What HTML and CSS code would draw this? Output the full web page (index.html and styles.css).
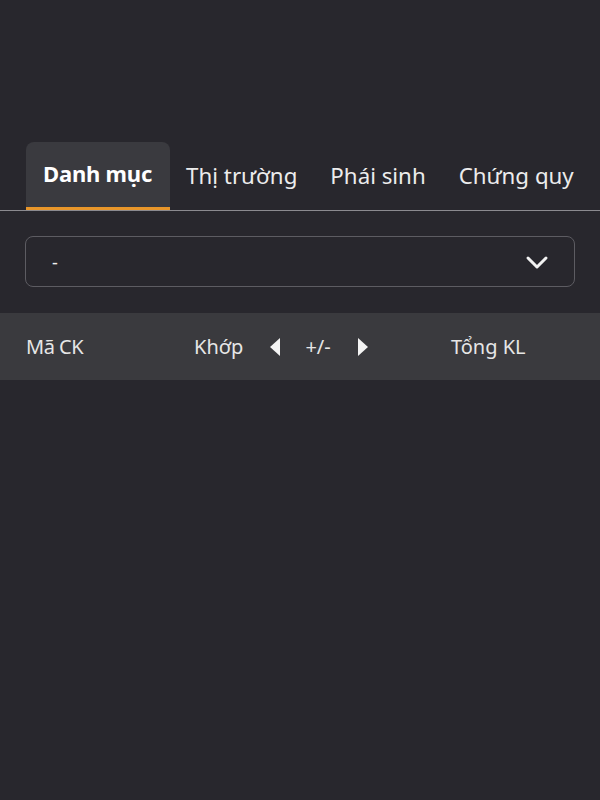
FILE: index.html
```html
<!DOCTYPE html>
<html lang="vi">
<head>
  <meta charset="UTF-8" />
  <meta name="viewport" content="width=device-width, initial-scale=1.0" />
  <title>Danh mục</title>
  <link rel="stylesheet" href="styles.css">
</head>
<body>
  <div class="tabs">
    <div class="tab active">Danh mục</div>
    <div class="tab">Thị trường</div>
    <div class="tab">Phái sinh</div>
    <div class="tab">Chứng quy</div>
  </div>

  <div class="picker">
    <div class="select">
      <span>-</span>
      <svg width="24" height="16" viewBox="0 0 24 16">
        <path d="M3 4l9 9 9-9" fill="none" stroke="#f2f2f2" stroke-width="3" stroke-linecap="round" stroke-linejoin="round" />
      </svg>
    </div>
  </div>

  <div class="head">
    <div class="col code">Mã CK</div>
    <div class="col match">
      Khớp
      <span class="arrow left"></span>
      <span class="pm">+/-</span>
      <span class="arrow right"></span>
    </div>
    <div class="col total">Tổng KL</div>
  </div>
</body>
</html>
```

FILE: styles.css
```css
body {
  margin: 0;
  background-color: #28272d;
  color: #f0f0f0;
  font-family: "Noto Sans", sans-serif;
  height: 800px;
}
.tabs {
  display: flex;
  padding: 142px 0 0 26px;
  border-bottom: 1px solid #8b8a8f;
  overflow: hidden;
  white-space: nowrap;
}
.tab {
  height: 68px;
  line-height: 68px;
  padding: 0 17px 0 16px;
  font-size: 22.3px;
  color: #ececec;
  box-sizing: border-box;
}
.tab.active {
  background: #3a3a3f;
  border-radius: 8px 8px 0 0;
  font-weight: bold;
  font-size: 22px;
  line-height: 63px;
  letter-spacing: -0.2px;
  padding: 0 18px 0 17px;
  border-bottom: 3px solid #e8962a;
  color: #fff;
}
.picker {
  padding: 25px 25px 0 25px;
}
.select {
  height: 51px;
  border: 1px solid #5d5c62;
  border-radius: 8px;
  box-sizing: border-box;
  display: flex;
  align-items: center;
  justify-content: space-between;
  padding: 0 25px 0 26px;
  font-size: 18px;
}
.head {
  margin-top: 26px;
  height: 67px;
  background: #3a3a3e;
  display: flex;
  align-items: center;
  font-size: 20px;
  color: #e6e6e6;
}
.col.code {
  width: 168px;
  padding-left: 26px;
  letter-spacing: -0.5px;
}
.col.match {
  display: flex;
  align-items: center;
  width: 257px;
}
.arrow {
  width: 0;
  height: 0;
  border-top: 9px solid transparent;
  border-bottom: 9px solid transparent;
}
.arrow.left {
  border-right: 10px solid #f4f4f4;
  margin-left: 27px;
}
.arrow.right {
  border-left: 10px solid #f4f4f4;
}
.pm {
  margin: 0 27px 0 25px;
}
```
